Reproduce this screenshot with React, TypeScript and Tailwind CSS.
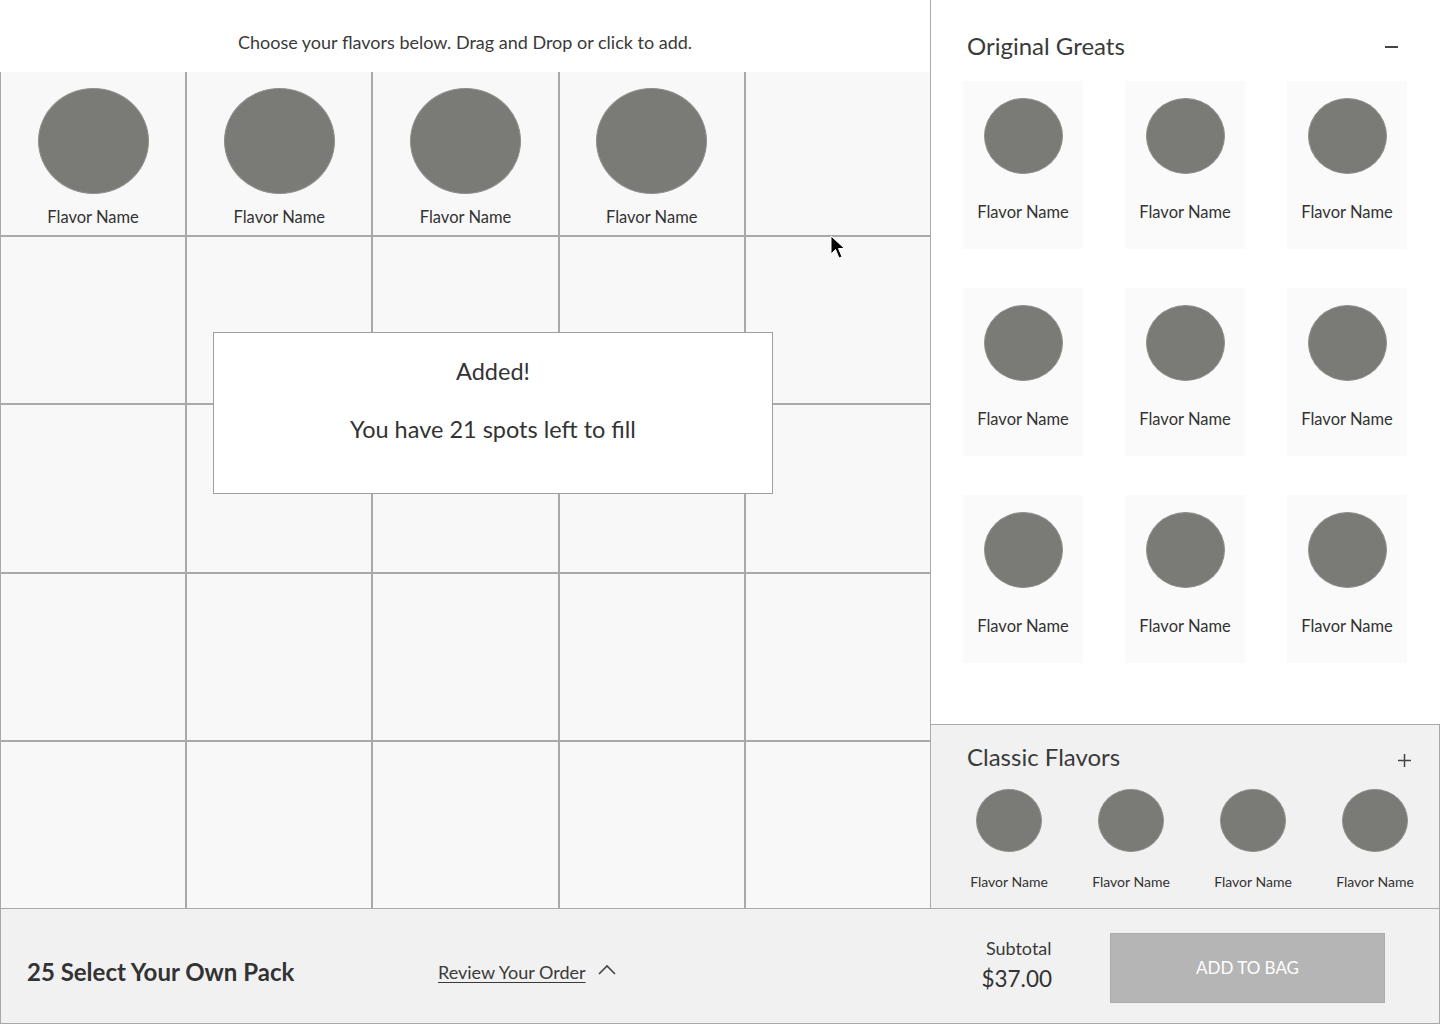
const font = { fontFamily: "Lato, 'Open Sans', sans-serif" };

function Dot({ className }: { className: string }) {
  return <div className={`rounded-[50%] bg-[#7a7a77] border border-[#8f8f8c] ${className}`} />;
}

function SlotCell({ filled }: { filled: boolean }) {
  return (
    <div className="bg-[#f8f8f8] flex flex-col items-center">
      {filled && (
        <>
          <Dot className="mt-4 w-[111px] h-[106px]" />
          <span className="mt-[13px] text-[16.5px] leading-[20px] text-[#333]">Flavor Name</span>
        </>
      )}
    </div>
  );
}

function FlavorCard() {
  return (
    <div className="w-[120px] h-[168px] bg-[#fafafa] flex flex-col items-center">
      <Dot className="mt-[17px] w-[79px] h-[76px]" />
      <span className="mt-[28px] text-[16.5px] leading-[20px] text-[#333]">Flavor Name</span>
    </div>
  );
}

export default function App() {
  const slots = Array.from({ length: 25 }, (_, i) => i < 4);

  return (
    <div className="w-[1440px] h-[1024px] bg-white relative overflow-hidden text-[#333]" style={font}>
      <div className="flex h-[908px]">
        {/* Pack grid */}
        <div className="w-[930px] flex flex-col">
          <div className="h-[72px] flex items-center justify-center pt-[12px] text-[18px] text-[#3a3a3a]">
            Choose your flavors below. Drag and Drop or click to add.
          </div>
          <div className="flex-1 grid grid-cols-5 grid-rows-[163px_1fr_1fr_1fr_1fr] gap-[2px] bg-[#a9a9a9] pl-[1px]">
            {slots.map((f, i) => (
              <SlotCell key={i} filled={f} />
            ))}
          </div>
        </div>

        {/* Flavor picker */}
        <div className="w-[510px] border-l border-[#a9a9a9] flex flex-col">
          <div className="h-[724px] pl-[32px] pr-[34px]">
            <div className="flex items-center justify-between pl-[4px] pt-[31px] pr-[2px]">
              <span className="text-[24px] leading-[30px] text-[#3a3a3a]">Original Greats</span>
              <span className="block w-[13px] h-[2px] bg-[#444] mt-[2px] mr-[6px]" />
            </div>
            <div className="mt-[20px] grid grid-cols-3 gap-x-[42px] gap-y-[39px] w-[444px]">
              {Array.from({ length: 9 }).map((_, i) => (
                <FlavorCard key={i} />
              ))}
            </div>
          </div>
          <div className="flex-1 bg-[#f1f1f1] border-t border-[#a9a9a9] border-r">
            <div className="flex items-center justify-between pt-[17px] pl-[36px] pr-[28px]">
              <span className="text-[24px] leading-[30px] text-[#3a3a3a]">Classic Flavors</span>
              <svg className="mt-[6px]" width="13" height="13" viewBox="0 0 13 13" stroke="#444" strokeWidth="1.5">
                <path d="M6.5 0 V13 M0 6.5 H13" />
              </svg>
            </div>
            <div className="flex gap-[32px] pl-[33px] mt-[17px]">
              {Array.from({ length: 4 }).map((_, i) => (
                <div key={i} className="w-[90px] flex flex-col items-center">
                  <Dot className="w-[66px] h-[63px]" />
                  <span className="mt-[21px] text-[14px] leading-[18px] text-[#333]">Flavor Name</span>
                </div>
              ))}
            </div>
          </div>
        </div>
      </div>

      {/* Bottom bar */}
      <div className="h-[116px] bg-[#f1f1f1] border border-[#a9a9a9] flex items-center">
        <span className="ml-[26px] w-[411px] mt-[12px] text-[24px] font-bold text-[#333]">25 Select Your Own Pack</span>
        <span className="mt-[12px] text-[18px] underline underline-offset-[3px] text-[#3a3a3a]">Review Your Order</span>
        <svg className="ml-[11px] mt-[6px]" width="20" height="14" viewBox="0 0 20 14" fill="none" stroke="#444" strokeWidth="1.6">
          <path d="M2 12 L10 4 L18 12" />
        </svg>
        <div className="ml-auto mr-[58px] -mt-[2px] flex flex-col items-center">
          <span className="text-[18px] text-[#3a3a3a] leading-[22px] ml-[4px]">Subtotal</span>
          <span className="text-[22.5px] text-[#333] leading-[30px] mt-[5px]">$37.00</span>
        </div>
        <button className="mr-[54px] mt-[3px] w-[275px] h-[70px] bg-[#b5b5b5] border border-[#ababab] text-white text-[17px]">
          ADD TO BAG
        </button>
      </div>

      {/* Added toast */}
      <div className="absolute left-[213px] top-[332px] w-[560px] h-[162px] bg-white border border-[#a0a0a0] flex flex-col items-center">
        <span className="mt-[23px] text-[23.5px] leading-[30px] text-[#333]">Added!</span>
        <span className="mt-[28px] text-[23.5px] leading-[30px] text-[#333]">You have 21 spots left to fill</span>
      </div>

      {/* Cursor */}
      <svg className="absolute left-[830px] top-[235px]" width="18" height="26" viewBox="0 0 18 26">
        <path d="M1 1 L1 19 L5.5 14.5 L9 23 L12 21.8 L8.5 13.5 L14.5 13.5 Z" fill="#000" stroke="#fff" strokeWidth="1" />
      </svg>
    </div>
  );
}
